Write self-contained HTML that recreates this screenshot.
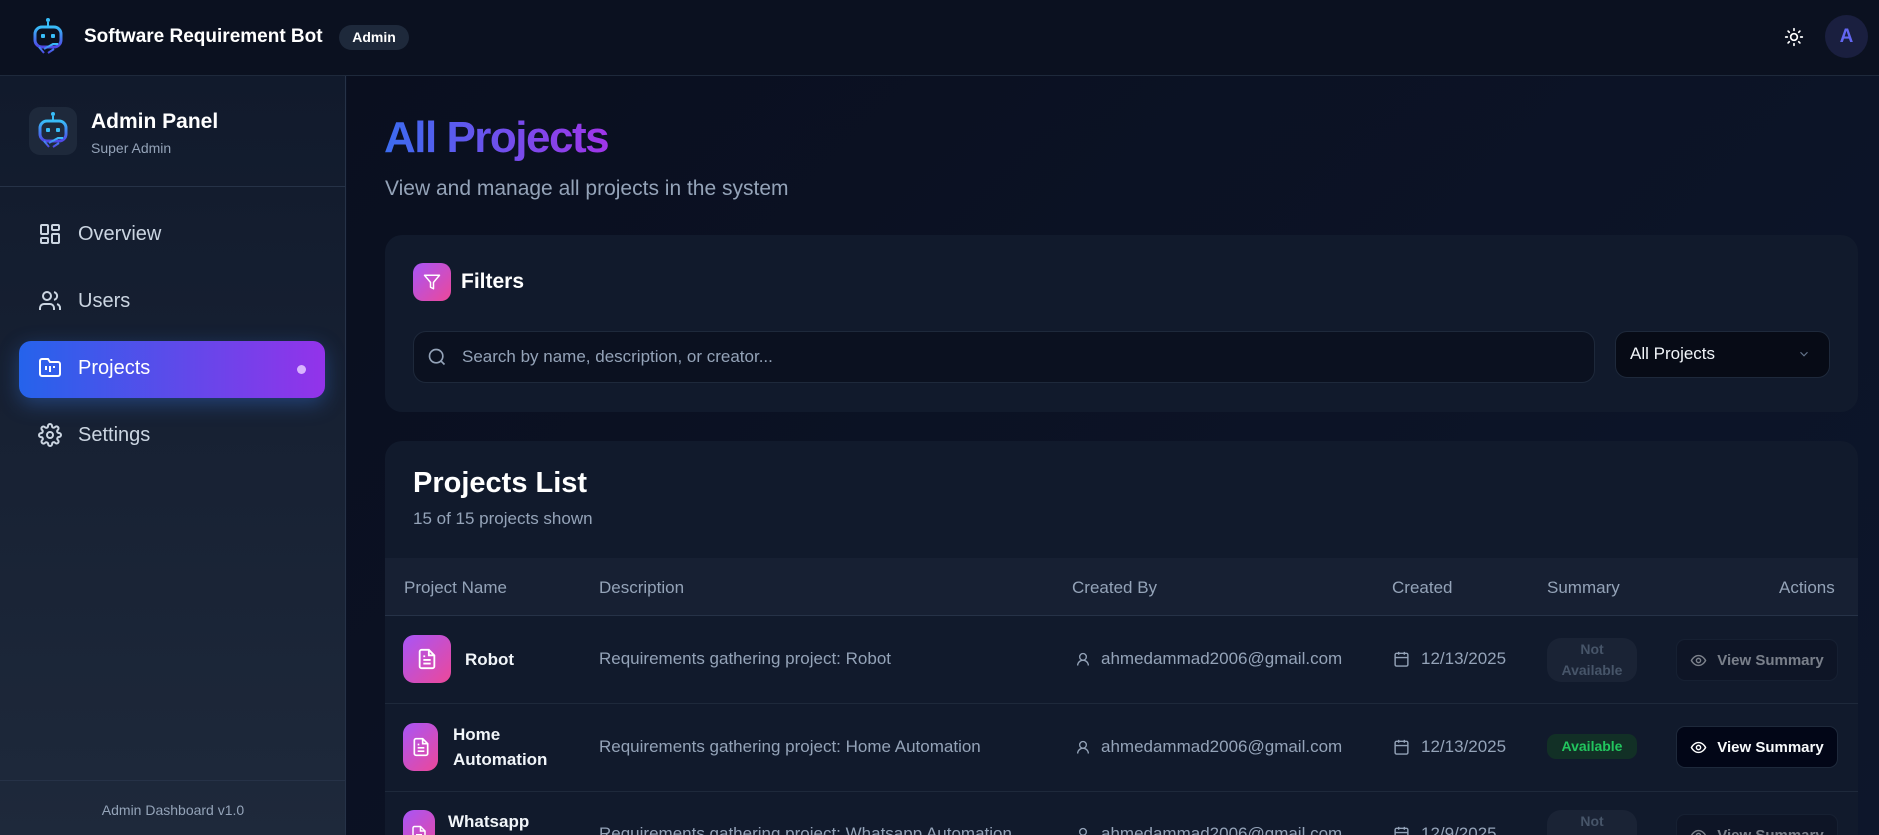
<!DOCTYPE html>
<html style="width:1879px;height:835px;overflow:hidden"><head><meta charset="utf-8"><style>
*{box-sizing:border-box;margin:0;padding:0}
body{width:1879px;height:835px;overflow:hidden;background:#0b1224;font-family:"Liberation Sans",Arial,sans-serif;color:#e2e8f0;position:relative}
.a{position:absolute}
.hdr{left:0;top:0;width:1879px;height:76px;background:#0b1120;border-bottom:1px solid #1e293b}
.side{left:0;top:76px;width:346px;height:759px;background:linear-gradient(180deg,#111a2c,#1e293b);border-right:1px solid #263247}
.main{left:347px;top:76px;width:1532px;height:759px;background:linear-gradient(135deg,#0a0f1f,#0d162b)}
.card{background:#111a2c;border-radius:17px}
.nav{left:38px;font-size:20px;color:#cbd5e1;display:flex;align-items:center;gap:16px}
.th{top:578px;font-size:17px;color:#94a3b8}
.td{font-size:17px;color:#94a3b8}
.ic{border-radius:11px;background:linear-gradient(135deg,#a855f7,#ec4899);display:flex;align-items:center;justify-content:center}
.nm{font-size:17px;font-weight:bold;color:#f1f5f9;line-height:25px}
.btn{left:1676px;width:162px;height:42px;border-radius:9px;border:1px solid #1e293b;background:#020617;display:flex;align-items:center;justify-content:center;gap:10px;font-size:15px;font-weight:bold;color:#f8fafc}
.na{left:1547px;width:90px;height:44px;border-radius:14px;background:#1a2335;color:#475569;font-size:14px;font-weight:bold;text-align:center;line-height:21px;padding-top:1px}
</style></head><body>
<div class="a hdr"></div>
<svg class="a" style="left:30px;top:17px" width="36" height="40" viewBox="0 0 36 40"><defs><linearGradient id="g" x1="0" y1="0" x2="0" y2="1"><stop offset="0" stop-color="#38bdf8"/><stop offset="1" stop-color="#4f46e5"/></linearGradient></defs><circle cx="18" cy="3" r="2" fill="#38bdf8"/><path d="M18 5v5" stroke="#38bdf8" stroke-width="2"/><rect x="5" y="10" width="26" height="20" rx="7" fill="none" stroke="url(#g)" stroke-width="3"/><rect x="11" y="17" width="4" height="4" rx="1" fill="#38bdf8"/><rect x="21" y="17" width="4" height="4" rx="1" fill="#38bdf8"/><path d="M9 30l5 6M14 32l9-5h5M18 36l6-4" stroke="url(#g)" stroke-width="2" fill="none"/></svg>
<div class="a" style="left:84px;top:26px;font-size:19px;font-weight:bold;color:#fff">Software Requirement Bot</div>
<div class="a" style="left:339px;top:25px;width:70px;height:25px;border-radius:13px;background:#1e293b;font-size:14px;font-weight:bold;color:#fff;text-align:center;line-height:25px">Admin</div>
<svg class="a" style="left:1784px;top:27px" width="20" height="20" viewBox="0 0 24 24" fill="none" stroke="#fff" stroke-width="2" stroke-linecap="round"><circle cx="12" cy="12" r="4"/><path d="M12 2v2M12 20v2M4.9 4.9l1.4 1.4M17.7 17.7l1.4 1.4M2 12h2M20 12h2M4.9 19.1l1.4-1.4M17.7 6.3l1.4-1.4"/></svg>
<div class="a" style="left:1825px;top:15px;width:43px;height:43px;border-radius:50%;background:#1a1f3f;color:#6366f1;font-size:19px;font-weight:bold;text-align:center;line-height:43px">A</div>

<div class="a side"></div>
<div class="a" style="left:29px;top:107px;width:48px;height:48px;border-radius:11px;background:#1e293b"></div>
<svg class="a" style="left:35px;top:110px" width="36" height="42" viewBox="0 0 36 40"><circle cx="18" cy="3" r="2" fill="#38bdf8"/><path d="M18 5v5" stroke="#38bdf8" stroke-width="2"/><rect x="5" y="10" width="26" height="20" rx="7" fill="none" stroke="url(#g)" stroke-width="3"/><rect x="11" y="17" width="4" height="4" rx="1" fill="#38bdf8"/><rect x="21" y="17" width="4" height="4" rx="1" fill="#38bdf8"/><path d="M9 30l5 6M14 32l9-5h5M18 36l6-4" stroke="url(#g)" stroke-width="2" fill="none"/></svg>
<div class="a" style="left:91px;top:110px;font-size:21px;font-weight:bold;color:#fff">Admin Panel</div>
<div class="a" style="left:91px;top:140px;font-size:14px;color:#94a3b8">Super Admin</div>
<div class="a" style="left:0;top:186px;width:346px;height:1px;background:#263247"></div>
<div class="a nav" style="top:222px"><svg width="24" height="24" viewBox="0 0 24 24" fill="none" stroke="#cbd5e1" stroke-width="2"><rect x="3" y="3" width="7" height="9" rx="1"/><rect x="14" y="3" width="7" height="5" rx="1"/><rect x="14" y="12" width="7" height="9" rx="1"/><rect x="3" y="16" width="7" height="5" rx="1"/></svg>Overview</div>
<div class="a nav" style="top:289px"><svg width="24" height="24" viewBox="0 0 24 24" fill="none" stroke="#cbd5e1" stroke-width="2"><circle cx="9" cy="7" r="4"/><path d="M2 21v-2a4 4 0 014-4h6a4 4 0 014 4v2M16 3.1a4 4 0 010 7.8M22 21v-2a4 4 0 00-3-3.9"/></svg>Users</div>
<div class="a" style="left:19px;top:341px;width:306px;height:57px;border-radius:12px;background:linear-gradient(90deg,#2563eb,#9333ea);box-shadow:0 6px 20px rgba(59,130,246,.35)"></div>
<div class="a nav" style="top:356px;color:#fff"><svg width="24" height="24" viewBox="0 0 24 24" fill="none" stroke="#fff" stroke-width="2"><path d="M4 20h16a2 2 0 002-2V8a2 2 0 00-2-2h-8l-2-3H4a2 2 0 00-2 2v13a2 2 0 002 2z"/><path d="M8 10v4M12 10v6M16 10v2"/></svg>Projects</div>
<div class="a" style="left:297px;top:365px;width:9px;height:9px;border-radius:50%;background:#d8b4fe"></div>
<div class="a nav" style="top:423px"><svg width="24" height="24" viewBox="0 0 24 24" fill="none" stroke="#cbd5e1" stroke-width="2"><circle cx="12" cy="12" r="3"/><path d="M19.4 15a1.7 1.7 0 00.3 1.8l.1.1a2 2 0 11-2.8 2.8l-.1-.1a1.7 1.7 0 00-1.8-.3 1.7 1.7 0 00-1 1.5V21a2 2 0 01-4 0v-.1a1.7 1.7 0 00-1.1-1.5 1.7 1.7 0 00-1.8.3l-.1.1a2 2 0 11-2.8-2.8l.1-.1a1.7 1.7 0 00.3-1.8 1.7 1.7 0 00-1.5-1H3a2 2 0 010-4h.1a1.7 1.7 0 001.5-1.1 1.7 1.7 0 00-.3-1.8l-.1-.1a2 2 0 112.8-2.8l.1.1a1.7 1.7 0 001.8.3H9a1.7 1.7 0 001-1.5V3a2 2 0 014 0v.1a1.7 1.7 0 001 1.5 1.7 1.7 0 001.8-.3l.1-.1a2 2 0 112.8 2.8l-.1.1a1.7 1.7 0 00-.3 1.8V9a1.7 1.7 0 001.5 1H21a2 2 0 010 4h-.1a1.7 1.7 0 00-1.5 1z"/></svg>Settings</div>
<div class="a" style="left:0;top:780px;width:346px;height:1px;background:#263247"></div>
<div class="a" style="left:0;top:802px;width:346px;text-align:center;font-size:14px;color:#94a3b8">Admin Dashboard v1.0</div>

<div class="a main"></div>
<div class="a" style="left:384px;top:113px;font-size:44px;font-weight:bold;letter-spacing:-1.5px;background:linear-gradient(90deg,#3b6cf0,#a035e8);-webkit-background-clip:text;color:transparent;padding-bottom:6px">All Projects</div>
<div class="a" style="left:385px;top:177px;font-size:21px;color:#94a3b8">View and manage all projects in the system</div>

<div class="a card" style="left:385px;top:235px;width:1473px;height:177px"></div>
<div class="a ic" style="left:413px;top:263px;width:38px;height:38px;border-radius:10px"><svg width="18" height="18" viewBox="0 0 24 24" fill="none" stroke="#fff" stroke-width="2" stroke-linejoin="round"><path d="M22 3H2l8 9.5V19l4 2v-8.5z"/></svg></div>
<div class="a" style="left:461px;top:270px;font-size:21px;font-weight:bold;color:#fff">Filters</div>
<div class="a" style="left:413px;top:331px;width:1182px;height:52px;border-radius:13px;background:#0b1120;border:1px solid #1e293b"></div>
<svg class="a" style="left:427px;top:347px" width="20" height="20" viewBox="0 0 24 24" fill="none" stroke="#94a3b8" stroke-width="2"><circle cx="11" cy="11" r="8"/><path d="M21 21l-4.3-4.3"/></svg>
<div class="a" style="left:462px;top:347px;font-size:17px;color:#94a3b8">Search by name, description, or creator...</div>
<div class="a" style="left:1615px;top:331px;width:215px;height:47px;border-radius:12px;background:#070b16;border:1px solid #1e293b"></div>
<div class="a" style="left:1630px;top:344px;font-size:17px;color:#f1f5f9">All Projects</div>
<svg class="a" style="left:1797px;top:347px" width="14" height="14" viewBox="0 0 24 24" fill="none" stroke="#64748b" stroke-width="2"><path d="M6 9l6 6 6-6"/></svg>

<div class="a card" style="left:385px;top:441px;width:1473px;height:394px;border-radius:17px 17px 0 0;overflow:hidden">
<div class="a" style="left:0;top:117px;width:1473px;height:58px;background:#172033;border-bottom:1px solid #263247"></div>
<div class="a" style="left:0;top:262px;width:1473px;height:1px;background:#1e293b"></div>
<div class="a" style="left:0;top:350px;width:1473px;height:1px;background:#1e293b"></div>
</div>
<div class="a" style="left:413px;top:467px;font-size:29px;font-weight:bold;color:#fff">Projects List</div>
<div class="a" style="left:413px;top:509px;font-size:17px;color:#94a3b8">15 of 15 projects shown</div>
<div class="a th" style="left:404px">Project Name</div>
<div class="a th" style="left:599px">Description</div>
<div class="a th" style="left:1072px">Created By</div>
<div class="a th" style="left:1392px">Created</div>
<div class="a th" style="left:1547px">Summary</div>
<div class="a th" style="left:1779px">Actions</div>

<div class="a ic" style="left:403px;top:635px;width:48px;height:48px"><svg width="22" height="24" viewBox="0 0 24 24" fill="none" stroke="#fff" stroke-width="2"><path d="M14 2H6a2 2 0 00-2 2v16a2 2 0 002 2h12a2 2 0 002-2V8z"/><path d="M14 2v6h6M8 13h8M8 17h8M8 9h2"/></svg></div>
<div class="a nm" style="left:465px;top:647px">Robot</div>
<div class="a td" style="left:599px;top:649px">Requirements gathering project: Robot</div>
<svg class="a" style="left:1075px;top:651px" width="16" height="17" viewBox="0 0 24 24" fill="none" stroke="#94a3b8" stroke-width="2"><circle cx="12" cy="8" r="5"/><path d="M20 21a8 8 0 00-16 0"/></svg>
<div class="a td" style="left:1101px;top:649px">ahmedammad2006@gmail.com</div>
<svg class="a" style="left:1393px;top:650px" width="17" height="18" viewBox="0 0 24 24" fill="none" stroke="#94a3b8" stroke-width="2"><rect x="3" y="4" width="18" height="18" rx="2"/><path d="M16 2v4M8 2v4M3 10h18"/></svg>
<div class="a td" style="left:1421px;top:649px">12/13/2025</div>
<div class="a na" style="top:638px">Not<br>Available</div>
<div class="a btn" style="top:639px;opacity:.45;background:#0b1120"><svg width="17" height="17" viewBox="0 0 24 24" fill="none" stroke="#fff" stroke-width="2"><path d="M2 12s3.5-7 10-7 10 7 10 7-3.5 7-10 7S2 12 2 12z"/><circle cx="12" cy="12" r="3"/></svg>View Summary</div>

<div class="a ic" style="left:403px;top:723px;width:35px;height:48px"><svg width="20" height="24" viewBox="0 0 24 24" fill="none" stroke="#fff" stroke-width="2"><path d="M14 2H6a2 2 0 00-2 2v16a2 2 0 002 2h12a2 2 0 002-2V8z"/><path d="M14 2v6h6M8 13h8M8 17h8M8 9h2"/></svg></div>
<div class="a nm" style="left:453px;top:722px">Home<br>Automation</div>
<div class="a td" style="left:599px;top:737px">Requirements gathering project: Home Automation</div>
<svg class="a" style="left:1075px;top:739px" width="16" height="17" viewBox="0 0 24 24" fill="none" stroke="#94a3b8" stroke-width="2"><circle cx="12" cy="8" r="5"/><path d="M20 21a8 8 0 00-16 0"/></svg>
<div class="a td" style="left:1101px;top:737px">ahmedammad2006@gmail.com</div>
<svg class="a" style="left:1393px;top:738px" width="17" height="18" viewBox="0 0 24 24" fill="none" stroke="#94a3b8" stroke-width="2"><rect x="3" y="4" width="18" height="18" rx="2"/><path d="M16 2v4M8 2v4M3 10h18"/></svg>
<div class="a td" style="left:1421px;top:737px">12/13/2025</div>
<div class="a" style="left:1547px;top:734px;width:90px;height:25px;border-radius:9px;background:#123026;color:#22c55e;font-size:14px;font-weight:bold;text-align:center;line-height:25px">Available</div>
<div class="a btn" style="top:726px"><svg width="17" height="17" viewBox="0 0 24 24" fill="none" stroke="#fff" stroke-width="2"><path d="M2 12s3.5-7 10-7 10 7 10 7-3.5 7-10 7S2 12 2 12z"/><circle cx="12" cy="12" r="3"/></svg>View Summary</div>

<div class="a" style="left:385px;top:792px;width:1473px;height:43px;overflow:hidden">
<div class="a ic" style="left:18px;top:18px;width:32px;height:48px"><svg width="18" height="22" viewBox="0 0 24 24" fill="none" stroke="#fff" stroke-width="2"><path d="M14 2H6a2 2 0 00-2 2v16a2 2 0 002 2h12a2 2 0 002-2V8z"/><path d="M14 2v6h6M8 13h8"/></svg></div>
<div class="a nm" style="left:63px;top:17px">Whatsapp</div>
<div class="a td" style="left:214px;top:32px">Requirements gathering project: Whatsapp Automation</div>
<svg class="a" style="left:690px;top:34px" width="16" height="17" viewBox="0 0 24 24" fill="none" stroke="#94a3b8" stroke-width="2"><circle cx="12" cy="8" r="5"/><path d="M20 21a8 8 0 00-16 0"/></svg>
<div class="a td" style="left:716px;top:32px">ahmedammad2006@gmail.com</div>
<svg class="a" style="left:1008px;top:33px" width="17" height="18" viewBox="0 0 24 24" fill="none" stroke="#94a3b8" stroke-width="2"><rect x="3" y="4" width="18" height="18" rx="2"/><path d="M16 2v4M8 2v4M3 10h18"/></svg>
<div class="a td" style="left:1036px;top:32px">12/9/2025</div>
<div class="a na" style="left:1162px;top:18px">Not<br>Available</div>
<div class="a btn" style="left:1291px;top:22px;opacity:.45;background:#0b1120"><svg width="17" height="17" viewBox="0 0 24 24" fill="none" stroke="#fff" stroke-width="2"><path d="M2 12s3.5-7 10-7 10 7 10 7-3.5 7-10 7S2 12 2 12z"/><circle cx="12" cy="12" r="3"/></svg>View Summary</div>
</div>
</body></html>
